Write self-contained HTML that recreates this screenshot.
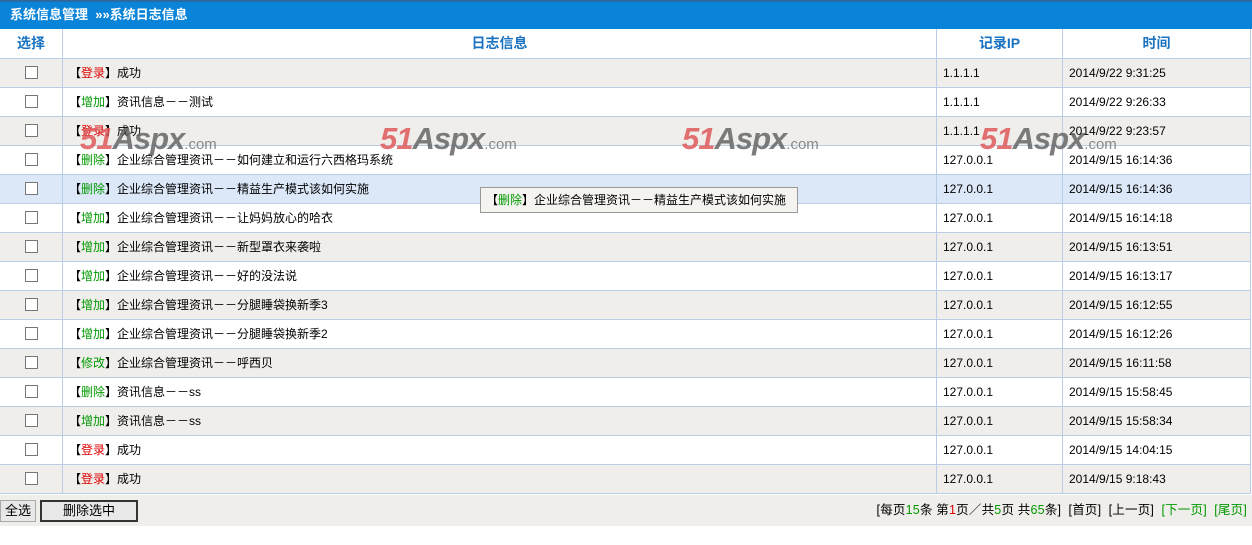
<!DOCTYPE html>
<html><head><meta charset="utf-8">
<style>
*{margin:0;padding:0;box-sizing:border-box}
body{width:1252px;height:545px;background:#fff;font-family:"Liberation Sans","Noto Sans CJK SC","WenQuanYi Zen Hei",sans-serif;font-size:12px;color:#000;position:relative;overflow:hidden}
.top{position:absolute;left:0;top:0;width:1252px;height:29px;background:#0a84d8;border-top:2px solid #2a6aa0;color:#fff;font-weight:bold;font-size:13px;line-height:26px;padding-left:10px}
.row{position:absolute;left:0;width:1251px;height:29px;border-bottom:1px solid #b9cde6}
.c{position:absolute;top:0;height:28px;line-height:28px;border-right:1px solid #b9cde6}
.c0{left:0;width:63px;text-align:center}
.c1{left:63px;width:874px;padding-left:6px}
.c2{left:937px;width:126px;padding-left:6px}
.c3{left:1063px;width:188px;padding-left:6px}
.hd .c{color:#1a73c0;font-weight:bold;font-size:14px;text-align:center;padding:0}
.cb{display:inline-block;width:13px;height:13px;border:1px solid #777;background:#fff;vertical-align:middle;margin-top:-2px}
.r{color:#d00}.g{color:#090}
.alt{background:#efeeea}
.hl{background:#dce8f8}
.wm{position:absolute;top:123px;font-weight:bold;font-style:italic;font-size:31px;letter-spacing:-1px;line-height:32px;opacity:.85}
.wm .a{color:#e05a5a}.wm .b{color:#666}.wm .d{color:#777;font-size:15px;font-style:normal;letter-spacing:0;font-weight:normal}
.tip{position:absolute;left:480px;top:187px;width:318px;height:26px;background:#f4f3ef;border:1px solid #999;line-height:24px;padding-left:5px;font-size:12px}
.foot{position:absolute;left:0;top:495px;width:1252px;height:31px;background:#efeeea}
.btn{position:absolute;top:5px;height:22px;background:#e8e8e8;border:1px solid #aaa;font-size:13px;line-height:20px;text-align:center}
.pg{position:absolute;right:5px;top:0;line-height:31px;font-size:12.5px;letter-spacing:0.2px}
</style></head><body>
<div class="top">系统信息管理 &nbsp;»»系统日志信息</div>
<div class="row hd" style="top:29px;height:30px"><div class="c c0" style="height:29px;line-height:29px">选择</div><div class="c c1" style="height:29px;line-height:29px">日志信息</div><div class="c c2" style="height:29px;line-height:29px">记录IP</div><div class="c c3" style="height:29px;line-height:29px">时间</div></div>

<div class="row alt" style="top:59px"><div class="c c0"><span class="cb"></span></div><div class="c c1">【<span class="r">登录</span>】成功</div><div class="c c2">1.1.1.1</div><div class="c c3">2014/9/22 9:31:25</div></div>
<div class="row" style="top:88px"><div class="c c0"><span class="cb"></span></div><div class="c c1">【<span class="g">增加</span>】资讯信息－－测试</div><div class="c c2">1.1.1.1</div><div class="c c3">2014/9/22 9:26:33</div></div>
<div class="row alt" style="top:117px"><div class="c c0"><span class="cb"></span></div><div class="c c1">【<span class="r">登录</span>】成功</div><div class="c c2">1.1.1.1</div><div class="c c3">2014/9/22 9:23:57</div></div>
<div class="row" style="top:146px"><div class="c c0"><span class="cb"></span></div><div class="c c1">【<span class="g">删除</span>】企业综合管理资讯－－如何建立和运行六西格玛系统</div><div class="c c2">127.0.0.1</div><div class="c c3">2014/9/15 16:14:36</div></div>
<div class="row hl" style="top:175px"><div class="c c0"><span class="cb"></span></div><div class="c c1">【<span class="g">删除</span>】企业综合管理资讯－－精益生产模式该如何实施</div><div class="c c2">127.0.0.1</div><div class="c c3">2014/9/15 16:14:36</div></div>
<div class="row" style="top:204px"><div class="c c0"><span class="cb"></span></div><div class="c c1">【<span class="g">增加</span>】企业综合管理资讯－－让妈妈放心的哈衣</div><div class="c c2">127.0.0.1</div><div class="c c3">2014/9/15 16:14:18</div></div>
<div class="row alt" style="top:233px"><div class="c c0"><span class="cb"></span></div><div class="c c1">【<span class="g">增加</span>】企业综合管理资讯－－新型罩衣来袭啦</div><div class="c c2">127.0.0.1</div><div class="c c3">2014/9/15 16:13:51</div></div>
<div class="row" style="top:262px"><div class="c c0"><span class="cb"></span></div><div class="c c1">【<span class="g">增加</span>】企业综合管理资讯－－好的没法说</div><div class="c c2">127.0.0.1</div><div class="c c3">2014/9/15 16:13:17</div></div>
<div class="row alt" style="top:291px"><div class="c c0"><span class="cb"></span></div><div class="c c1">【<span class="g">增加</span>】企业综合管理资讯－－分腿睡袋换新季3</div><div class="c c2">127.0.0.1</div><div class="c c3">2014/9/15 16:12:55</div></div>
<div class="row" style="top:320px"><div class="c c0"><span class="cb"></span></div><div class="c c1">【<span class="g">增加</span>】企业综合管理资讯－－分腿睡袋换新季2</div><div class="c c2">127.0.0.1</div><div class="c c3">2014/9/15 16:12:26</div></div>
<div class="row alt" style="top:349px"><div class="c c0"><span class="cb"></span></div><div class="c c1">【<span class="g">修改</span>】企业综合管理资讯－－呼西贝</div><div class="c c2">127.0.0.1</div><div class="c c3">2014/9/15 16:11:58</div></div>
<div class="row" style="top:378px"><div class="c c0"><span class="cb"></span></div><div class="c c1">【<span class="g">删除</span>】资讯信息－－ss</div><div class="c c2">127.0.0.1</div><div class="c c3">2014/9/15 15:58:45</div></div>
<div class="row alt" style="top:407px"><div class="c c0"><span class="cb"></span></div><div class="c c1">【<span class="g">增加</span>】资讯信息－－ss</div><div class="c c2">127.0.0.1</div><div class="c c3">2014/9/15 15:58:34</div></div>
<div class="row" style="top:436px"><div class="c c0"><span class="cb"></span></div><div class="c c1">【<span class="r">登录</span>】成功</div><div class="c c2">127.0.0.1</div><div class="c c3">2014/9/15 14:04:15</div></div>
<div class="row alt" style="top:465px"><div class="c c0"><span class="cb"></span></div><div class="c c1">【<span class="r">登录</span>】成功</div><div class="c c2">127.0.0.1</div><div class="c c3">2014/9/15 9:18:43</div></div>

<div class="wm" style="left:80px"><span class="a">51</span><span class="b">Aspx</span><span class="d">.com</span></div>
<div class="wm" style="left:380px"><span class="a">51</span><span class="b">Aspx</span><span class="d">.com</span></div>
<div class="wm" style="left:682px"><span class="a">51</span><span class="b">Aspx</span><span class="d">.com</span></div>
<div class="wm" style="left:980px"><span class="a">51</span><span class="b">Aspx</span><span class="d">.com</span></div>

<div class="tip">【<span class="g">删除</span>】企业综合管理资讯－－精益生产模式该如何实施</div>

<div class="foot">
<div class="btn" style="left:0;width:36px">全选</div>
<div class="btn" style="left:40px;width:98px;border:2px solid #333;line-height:18px">删除选中</div>
<div class="pg">[每页<span class="g">15</span>条 第<span class="r">1</span>页／共<span class="g">5</span>页 共<span class="g">65</span>条] &nbsp;[首页] &nbsp;[上一页] &nbsp;<span class="g">[下一页]</span> &nbsp;<span class="g">[尾页]</span></div>
</div>
</body></html>
